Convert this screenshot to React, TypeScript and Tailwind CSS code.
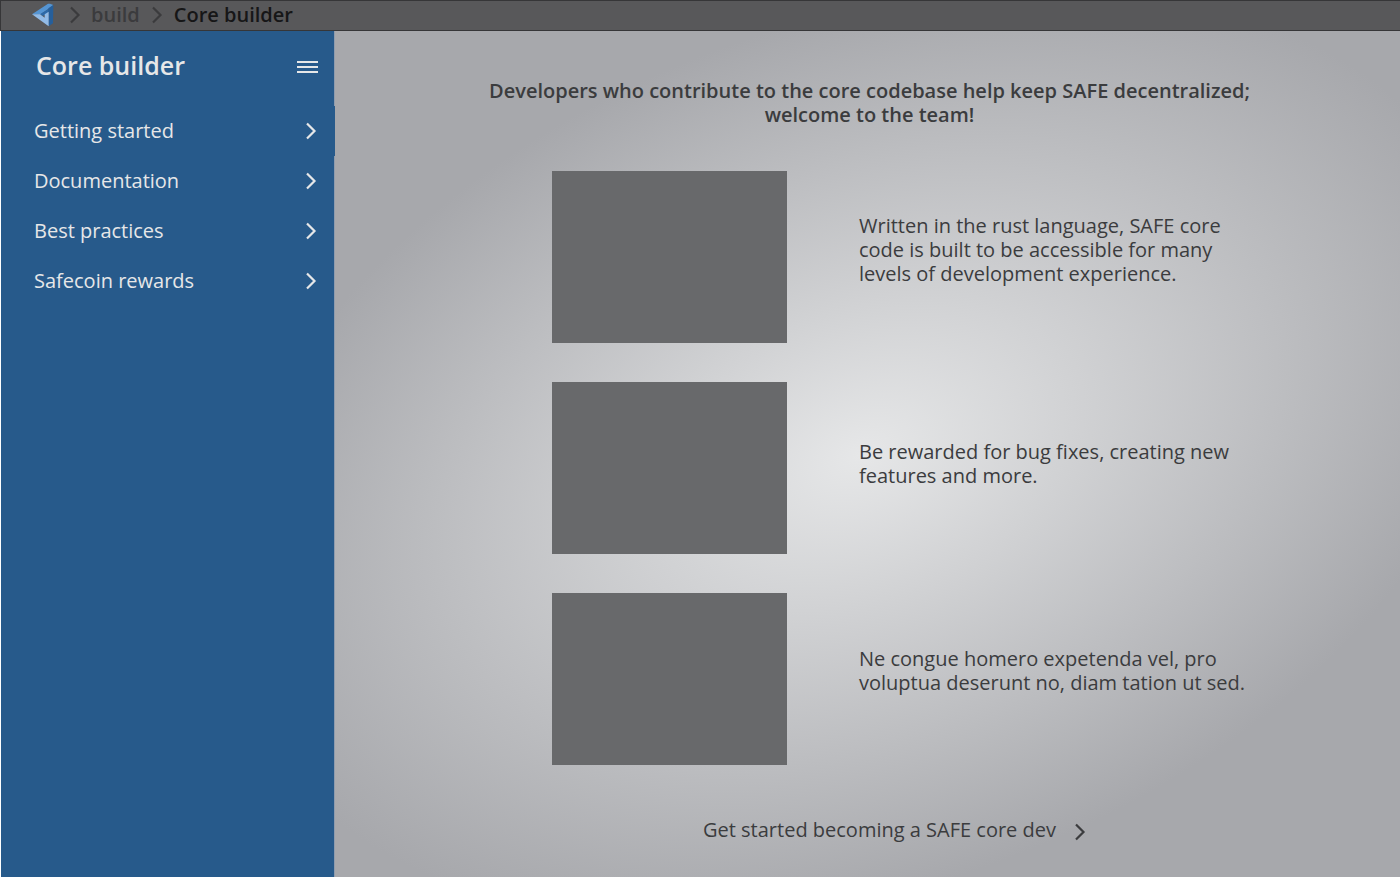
import React from "react";

const menuItems = ["Getting started", "Documentation", "Best practices", "Safecoin rewards"];

const features = [
  {
    text: "Written in the rust language, SAFE core code is built to be accessible for many levels of development experience.",
    pad: "pb-3.5",
  },
  { text: "Be rewarded for bug fixes, creating new features and more.", pad: "pb-2" },
  { text: "Ne congue homero expetenda vel, pro voluptua deserunt no, diam tation ut sed.", pad: "pb-4" },
];

function Chevron({ className }: { className: string }) {
  return (
    <svg
      className={className}
      viewBox="0 0 12 18"
      fill="none"
      stroke="currentColor"
      strokeWidth="2.2"
      aria-hidden="true"
    >
      <path d="M2 1.5 L9.5 9 L2 16.5" />
    </svg>
  );
}

function Logo() {
  return (
    <svg className="h-6 w-6" viewBox="9 9 72 72" aria-hidden="true">
      <path d="M12 43 L60 11 L66 11 L76 15 L62 26 L36 44 Z" fill="#5595d3" />
      <path d="M36 43 L62 26 L62 37 L45 48 Z" fill="#2c69a8" />
      <path d="M61 25 L76 15 L75 70 L62 79 Z" fill="#265f9b" />
      <path d="M12 43 L36 43 L50 53 L50 43 L62 35 L62 79 Z" fill="#92bbe7" />
    </svg>
  );
}

function Backdrop() {
  return (
    <svg
      className="absolute inset-0 h-full w-full"
      viewBox="0 0 1066 846"
      preserveAspectRatio="none"
      aria-hidden="true"
    >
      <defs>
        <radialGradient
          id="glow"
          gradientUnits="userSpaceOnUse"
          cx="0"
          cy="0"
          r="1"
          gradientTransform="translate(526 424) rotate(-21) scale(665 430)"
        >
          <stop offset="0" stopColor="#e6e7e8" />
          <stop offset="1" stopColor="#a7a8ac" />
        </radialGradient>
      </defs>
      <rect width="1066" height="846" fill="url(#glow)" />
    </svg>
  );
}

export default function App() {
  return (
    <div className="flex min-h-screen flex-col bg-[#a7a8ac] font-['Open_Sans',sans-serif] text-xl leading-6 text-[#3b3c3e]">
      <header className="h-[31px] border-y border-l border-[#363638] bg-[#58585a]">
        <nav aria-label="Breadcrumb" className="flex h-full items-center pb-0.5 pl-[30px] font-semibold">
          <a href="#home" aria-label="Home">
            <Logo />
          </a>
          <Chevron className="ml-3.5 h-[18px] w-3 text-[#3b3b3d]" />
          <a href="#build" className="ml-2.5 text-[#3b3b3d]">
            build
          </a>
          <Chevron className="ml-[11px] h-[18px] w-3 text-[#3b3b3d]" />
          <a href="#core-builder" aria-current="page" className="ml-[11px] text-[#161617]">
            Core builder
          </a>
        </nav>
      </header>

      <div className="flex flex-1">
        <aside className="relative w-[335px] shrink-0 border-x border-l-white border-r-[#8f9cae] bg-[#275a8b] text-[#e6e7e8]">
          <div className="flex h-[75px] items-center justify-between pr-4 pb-1 pl-[35px]">
            <h1 className="pb-1 text-[25px] leading-8 font-semibold">Core builder</h1>
            <button type="button" aria-label="Toggle menu" className="flex w-[21px] flex-col gap-[3px]">
              <span className="h-0.5 w-full bg-[#e6e7e8]" />
              <span className="h-0.5 w-full bg-[#e6e7e8]" />
              <span className="h-0.5 w-full bg-[#e6e7e8]" />
            </button>
          </div>
          <nav aria-label="Core builder">
            {menuItems.map((item) => (
              <a
                key={item}
                href="#section"
                className="-mr-px flex h-[50px] items-center justify-between pr-[18px] pl-[33px] first:bg-[#275a8b]"
              >
                {item}
                <Chevron className="h-[18px] w-3" />
              </a>
            ))}
          </nav>
        </aside>

        <main className="relative flex-1">
          <Backdrop />
          <div className="relative flex flex-col items-center pt-12">
            <h2 className="max-w-[780px] pl-1 text-center font-semibold">
              Developers who contribute to the core codebase help keep SAFE decentralized; welcome to the team!
            </h2>
            <div className="mt-11 flex flex-col gap-[39px] pl-[68px]">
              {features.map((feature) => (
                <section key={feature.text} className="flex items-center gap-[72px]">
                  <div className="h-[172px] w-[235px] shrink-0 bg-[#68696b]" />
                  <p className={`w-[392px] ${feature.pad}`}>{feature.text}</p>
                </section>
              ))}
            </div>
            <a href="#get-started" className="mt-[53px] flex items-center gap-[18px] pl-[54px]">
              Get started becoming a SAFE core dev
              <Chevron className="mt-1 h-[18px] w-3" />
            </a>
          </div>
        </main>
      </div>
    </div>
  );
}
